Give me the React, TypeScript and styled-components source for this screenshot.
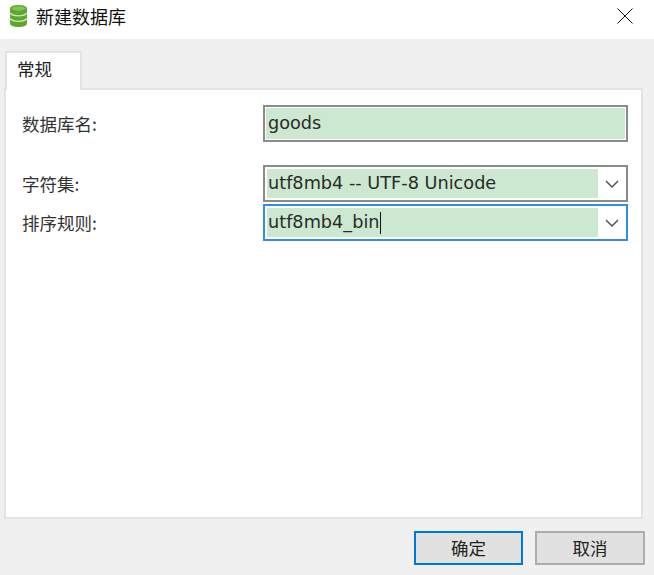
import React from "react";
import styled, { createGlobalStyle } from "styled-components";

const Global = createGlobalStyle`
  html, body { margin: 0; padding: 0; background: #f0f0f0; }
  body { font-family: "Noto Sans CJK SC", "Liberation Sans", sans-serif; color: #222; }
`;

const Dialog = styled.div`
  width: 654px;
  height: 575px;
  display: flex;
  flex-direction: column;
  background: #f0f0f0;
  overflow: hidden;
`;

const TitleBar = styled.div`
  height: 39px;
  flex: none;
  display: flex;
  align-items: center;
  background: #fff;
  padding: 0 21px 7px 9px;
  box-sizing: border-box;
`;

const Title = styled.div`
  flex: 1;
  margin-left: 8px;
  font-size: 18px;
  line-height: 24px;
  color: #111;
`;

const Tabs = styled.div`
  height: 51px;
  flex: none;
  display: flex;
  align-items: flex-end;
  padding: 12px 0 0 5px;
  box-sizing: border-box;
  margin-bottom: -2px;
  position: relative;
  z-index: 1;
`;

const Tab = styled.div`
  width: 77px;
  height: 39px;
  box-sizing: border-box;
  background: #fff;
  border: 2px solid #e3e3e3;
  border-bottom: none;
  padding: 0 0 0 10px;
  font-size: 17.500px;
  line-height: 32px;
  color: #222;
`;

const Panel = styled.div`
  width: 639px;
  height: 431px;
  margin-left: 4px;
  box-sizing: border-box;
  background: #fff;
  border: 2px solid #e3e3e3;
  padding: 15px 13px 0 16px;
`;

const Row = styled.div<{ $top?: number }>`
  display: grid;
  grid-template-columns: 241px 365px;
  height: 37px;
  margin-top: ${(p) => p.$top ?? 0}px;
`;

const Label = styled.div`
  font-size: 17.500px;
  line-height: 37px;
  color: #333;
`;

const Field = styled.div<{ $focus?: boolean }>`
  height: 37px;
  box-sizing: border-box;
  display: flex;
  align-items: stretch;
  background: #fff;
  border: 2px solid ${(p) => (p.$focus ? "#2f8fe6" : "#8a8a8a")};
`;

const Fill = styled.div<{ $select?: boolean }>`
  flex: 1;
  margin: ${(p) => (p.$select ? "2px 0 2px 2px" : "1px")};
  padding: ${(p) => (p.$select ? "0 0 0 1px" : "0 0 0 2px")};
  background: #cde8d0;
  font-family: "DejaVu Sans", "Liberation Sans", sans-serif;
  font-size: 17.700px;
  line-height: 29px;
  color: #2a2a2a;
  white-space: nowrap;
  display: flex;
  align-items: center;
`;

const Caret = styled.span`
  display: inline-block;
  width: 1px;
  height: 22px;
  background: #111;
`;

const Arrow = styled.div`
  width: 28px;
  flex: none;
  display: flex;
  align-items: center;
  justify-content: center;
`;

const Footer = styled.div`
  display: flex;
  justify-content: flex-end;
  gap: 12px;
  padding: 12px 9px 0 0;
`;

const Button = styled.div<{ $primary?: boolean }>`
  width: ${(p) => (p.$primary ? 109 : 110)}px;
  height: 34px;
  box-sizing: border-box;
  background: #e1e1e1;
  border: 2px solid ${(p) => (p.$primary ? "#0078d7" : "#adadad")};
  text-align: center;
  font-size: 17.500px;
  line-height: 30px;
  color: #222;
`;

const Chevron = () => (
  <svg width="14" height="8" viewBox="0 0 14 8" fill="none">
    <path d="M1 1l6 6 6-6" stroke="#555" strokeWidth="1.500" />
  </svg>
);

const DbIcon = () => (
  <svg width="19" height="24" viewBox="0 0 19 24">
    <path d="M1 4.500C1 2.500 4.800 1 9.500 1S18 2.500 18 4.500v15c0 2-3.800 3.500-8.500 3.500S1 21.500 1 19.500z" fill="#5fa62c" />
    <path d="M1 9c1.500 1.800 4.800 2.800 8.500 2.800S16.500 10.800 18 9M1 14.500c1.500 1.800 4.800 2.800 8.500 2.800s7-1 8.500-2.800" stroke="#d6e8c2" strokeWidth="1.300" fill="none" />
    <ellipse cx="9.500" cy="4.500" rx="7" ry="2.200" fill="#86c255" />
  </svg>
);

const CloseIcon = () => (
  <svg width="16" height="16" viewBox="0 0 16 16" fill="none">
    <path d="M.5.5l15 15M15.500.5l-15 15" stroke="#111" strokeWidth="1" />
  </svg>
);

export default function App() {
  return (
    <Dialog>
      <Global />
      <TitleBar>
        <DbIcon />
        <Title>新建数据库</Title>
        <CloseIcon />
      </TitleBar>
      <Tabs>
        <Tab>常规</Tab>
      </Tabs>
      <Panel>
        <Row>
          <Label>数据库名:</Label>
          <Field>
            <Fill>goods</Fill>
          </Field>
        </Row>
        <Row $top={23}>
          <Label>字符集:</Label>
          <Field>
            <Fill $select>utf8mb4 -- UTF-8 Unicode</Fill>
            <Arrow><Chevron /></Arrow>
          </Field>
        </Row>
        <Row $top={2}>
          <Label>排序规则:</Label>
          <Field $focus>
            <Fill $select>utf8mb4_bin<Caret /></Fill>
            <Arrow><Chevron /></Arrow>
          </Field>
        </Row>
      </Panel>
      <Footer>
        <Button $primary>确定</Button>
        <Button>取消</Button>
      </Footer>
    </Dialog>
  );
}
